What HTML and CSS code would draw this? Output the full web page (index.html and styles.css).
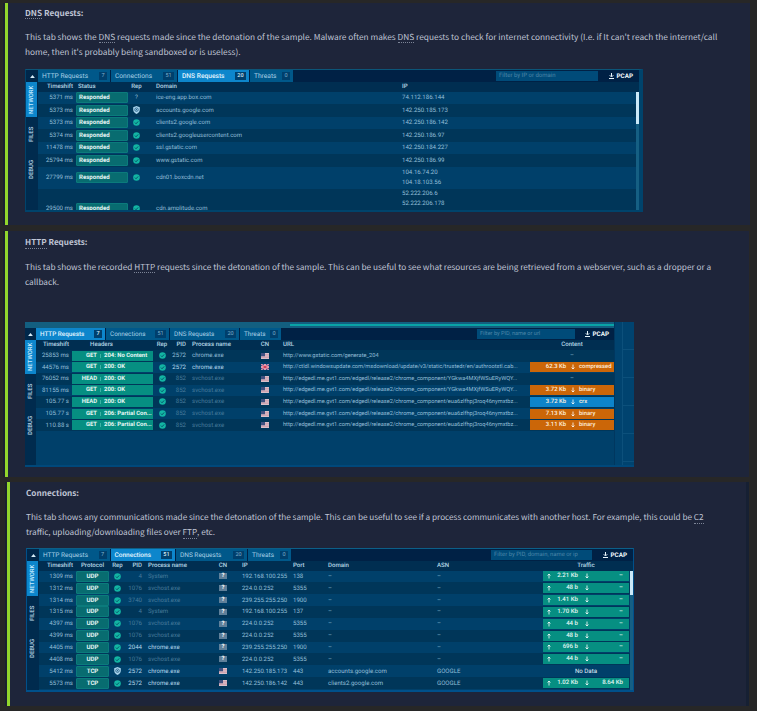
FILE: index.html
```html
<!DOCTYPE html>
<html lang="en">
<head>
<meta charset="utf-8">
<title>Network tabs</title>
<link rel="stylesheet" href="styles.css">
</head>
<body>
<svg class="defs" width="0" height="0">
  <symbol id="ok" viewBox="0 0 14 14"><circle cx="7" cy="7" r="6.6" fill="#12b5a3"/><path d="M3.8 7.2l2.3 2.3 4.2-4.6" fill="none" stroke="#064a67" stroke-width="1.8"/></symbol>
  <symbol id="shield" viewBox="0 0 14 16"><path d="M7 0l6.6 2.3v5.2C13.600 11.500 10.500 14.500 7 16 3.500 14.500.4 11.500.4 7.500V2.300z" fill="#a9d3ec"/><circle cx="7" cy="7.300" r="3.500" fill="none" stroke="#15527c" stroke-width="1.500"/><circle cx="7" cy="7.300" r="1.200" fill="#15527c"/></symbol>
  <symbol id="us" viewBox="0 0 16 12"><path d="M0 0h16v12H0z" fill="#dcc9d2"/><path d="M0 2.600h16M0 6h16M0 9.400h16" stroke="#c98c9c" stroke-width="1.500"/><path d="M0 0h8v6.500H0z" fill="#40507f"/></symbol>
  <symbol id="uk" viewBox="0 0 16 12"><path d="M0 0h16v12H0z" fill="#25408a"/><path d="M0 0l16 12M16 0L0 12" stroke="#e7dce6" stroke-width="2.600"/><path d="M8 0v12M0 6h16" stroke="#f3e6ec" stroke-width="4.400"/><path d="M8 0v12M0 6h16M1 1l14 10M15 1L1 11" stroke="#d2304f" stroke-width="1.700"/></symbol>
  <symbol id="save" viewBox="0 0 10 12"><path d="M5 0v7M1.500 4.500L5 8l3.500-3.500M0 11h10" fill="none" stroke="#e8f4fb" stroke-width="2"/></symbol>
  <symbol id="down" viewBox="0 0 8 12"><path d="M4 1v9M1.200 7L4 10l2.800-3" fill="none" stroke="#fff" stroke-width="1.600"/></symbol>
  <symbol id="up" viewBox="0 0 8 12"><path d="M4 11V2M1.200 5L4 2l2.800 3" fill="none" stroke="#fff" stroke-width="1.600"/></symbol>
  <symbol id="tri" viewBox="0 0 8 5"><path d="M0 5l4-5 4 5z" fill="#d6ecf8"/></symbol>
</svg>

<section class="card c1">
  <h2><abbr>DNS</abbr> Requests:</h2>
  <p>This tab shows the <abbr>DNS</abbr> requests made since the detonation of the sample. Malware often makes <abbr>DNS</abbr> requests to check for internet connectivity (I.e. if It can't reach the internet/call<br>home, then it's probably being sandboxed or is useless).</p>
  <div class="panel p1">
    <div class="side"><i class="fold"><svg><use href="#tri"/></svg></i><b class="on">NETWORK</b><b>FILES</b><b>DEBUG</b></div>
    <div class="main">
      <nav class="bar">
        <a>HTTP Requests<em>7</em></a><a>Connections<em>51</em></a><a class="on">DNS Requests<em>20</em></a><a>Threats<em>0</em></a>
        <span class="filter">Filter by IP or domain</span><strong><svg><use href="#save"/></svg>PCAP</strong>
      </nav>
      <div class="tbl">
        <div class="head"><span class="r">Timeshift</span><span>Status</span><span class="c">Rep</span><span>Domain</span><span>IP</span></div>
        <div class="scroller">
          <div class="rows">
            <div class="row"><span class="r">5371 ms</span><span class="pill">Responded</span><span class="c">?</span><span>ice-eng.app.box.com</span><span>74.112.186.144</span></div>
            <div class="row"><span class="r">5373 ms</span><span class="pill">Responded</span><span class="c"><svg class="sh"><use href="#shield"/></svg></span><span>accounts.google.com</span><span>142.250.185.173</span></div>
            <div class="row"><span class="r">5373 ms</span><span class="pill">Responded</span><span class="c"><svg class="ok"><use href="#ok"/></svg></span><span>clients2.google.com</span><span>142.250.186.142</span></div>
            <div class="row"><span class="r">5374 ms</span><span class="pill">Responded</span><span class="c"><svg class="ok"><use href="#ok"/></svg></span><span>clients2.googleusercontent.com</span><span>142.250.186.97</span></div>
            <div class="row"><span class="r">11478 ms</span><span class="pill">Responded</span><span class="c"><svg class="ok"><use href="#ok"/></svg></span><span>ssl.gstatic.com</span><span>142.250.184.227</span></div>
            <div class="row"><span class="r">25794 ms</span><span class="pill">Responded</span><span class="c"><svg class="ok"><use href="#ok"/></svg></span><span>www.gstatic.com</span><span>142.250.186.99</span></div>
            <div class="row two"><span class="r">27799 ms</span><span class="pill">Responded</span><span class="c"><svg class="ok"><use href="#ok"/></svg></span><span>cdn01.boxcdn.net</span><span>104.16.74.20<br>104.18.103.56</span></div>
            <div class="row four"><span class="r">29500 ms</span><span class="pill">Responded</span><span class="c"><svg class="ok"><use href="#ok"/></svg></span><span>cdn.amplitude.com</span><span class="top">52.222.206.6<br>52.222.206.178</span></div>
          </div>
          <div class="track"><i></i></div>
        </div>
      </div>
    </div>
  </div>
</section>

<section class="card c2">
  <h2><abbr>HTTP</abbr> Requests:</h2>
  <p>This tab shows the recorded <abbr>HTTP</abbr> requests since the detonation of the sample. This can be useful to see what resources are being retrieved from a webserver, such as a dropper or a<br>callback.</p>
  <div class="panel p2">
    <div class="timeline"><i></i></div>
    <div class="side"><i class="fold"><svg><use href="#tri"/></svg></i><b class="on">NETWORK</b><b>FILES</b><b>DEBUG</b></div>
    <div class="main">
      <nav class="bar">
        <a class="on">HTTP Requests<em>7</em></a><a>Connections<em>51</em></a><a>DNS Requests<em>20</em></a><a>Threats<em>0</em></a>
        <span class="filter">Filter by PID, name or url</span><strong><svg><use href="#save"/></svg>PCAP</strong>
      </nav>
      <div class="tbl">
        <div class="head"><span class="r">Timeshift</span><span class="c hd">Headers</span><span class="c">Rep</span><span class="r">PID</span><span>Process name</span><span class="c">CN</span><span class="u">URL</span><span class="c">Content</span></div>
        <div class="row"><span class="r">25853 ms</span><span class="req"><b>GET</b><i></i><b>204: No Content</b></span><span class="c"><svg class="ok"><use href="#ok"/></svg></span><span class="r">2572</span><span>chrome.exe</span><span class="c"><svg class="fl"><use href="#us"/></svg></span><span class="u">http://www.gstatic.com/generate_204</span><span class="c">–</span></div>
        <div class="row lit"><span class="r">44576 ms</span><span class="req"><b>GET</b><i></i><b>200: OK</b></span><span class="c"><svg class="ok"><use href="#ok"/></svg></span><span class="r">2572</span><span>chrome.exe</span><span class="c"><svg class="fl"><use href="#uk"/></svg></span><span class="u">http://ctldl.windowsupdate.com/msdownload/update/v3/static/trustedr/en/authrootstl.cab...</span><span class="file"><b>62.3 Kb</b><svg><use href="#down"/></svg><b>compressed</b></span></div>
        <div class="row dim"><span class="r">76052 ms</span><span class="req"><b>HEAD</b><i></i><b>200: OK</b></span><span class="c"><svg class="ok"><use href="#ok"/></svg></span><span class="r">852</span><span>svchost.exe</span><span class="c"><svg class="fl"><use href="#us"/></svg></span><span class="u">http://edgedl.me.gvt1.com/edgedl/release2/chrome_component/YGkwa4MXjfWSuERyWQY...</span><span class="c">–</span></div>
        <div class="row dim"><span class="r">81155 ms</span><span class="req"><b>GET</b><i></i><b>200: OK</b></span><span class="c"><svg class="ok"><use href="#ok"/></svg></span><span class="r">852</span><span>svchost.exe</span><span class="c"><svg class="fl"><use href="#us"/></svg></span><span class="u">http://edgedl.me.gvt1.com/edgedl/release2/chrome_component/YGkwa4MXjfWSuERyWQY...</span><span class="file"><b>3.72 Kb</b><svg><use href="#down"/></svg><b>binary</b></span></div>
        <div class="row dim"><span class="r">105.77 s</span><span class="req"><b>HEAD</b><i></i><b>200: OK</b></span><span class="c"><svg class="ok"><use href="#ok"/></svg></span><span class="r">852</span><span>svchost.exe</span><span class="c"><svg class="fl"><use href="#us"/></svg></span><span class="u">http://edgedl.me.gvt1.com/edgedl/release2/chrome_component/eua6zlfhpj3roq46nymxtbz...</span><span class="file crx"><b>3.72 Kb</b><svg><use href="#down"/></svg><b>crx</b></span></div>
        <div class="row dim"><span class="r">105.77 s</span><span class="req"><b>GET</b><i></i><b>206: Partial Con...</b></span><span class="c"><svg class="ok"><use href="#ok"/></svg></span><span class="r">852</span><span>svchost.exe</span><span class="c"><svg class="fl"><use href="#us"/></svg></span><span class="u">http://edgedl.me.gvt1.com/edgedl/release2/chrome_component/eua6zlfhpj3roq46nymxtbz...</span><span class="file"><b>7.13 Kb</b><svg><use href="#down"/></svg><b>binary</b></span></div>
        <div class="row dim"><span class="r">110.88 s</span><span class="req"><b>GET</b><i></i><b>206: Partial Con...</b></span><span class="c"><svg class="ok"><use href="#ok"/></svg></span><span class="r">852</span><span>svchost.exe</span><span class="c"><svg class="fl"><use href="#us"/></svg></span><span class="u">http://edgedl.me.gvt1.com/edgedl/release2/chrome_component/eua6zlfhpj3roq46nymxtbz...</span><span class="file"><b>3.11 Kb</b><svg><use href="#down"/></svg><b>binary</b></span></div>
      </div>
    </div>
    <div class="gutter"><i></i></div>
  </div>
</section>

<section class="card c3">
  <h2>Connections:</h2>
  <p>This tab shows any communications made since the detonation of the sample. This can be useful to see if a process communicates with another host. For example, this could be <abbr>C2</abbr><br>traffic, uploading/downloading files over <abbr>FTP</abbr>, etc.</p>
  <div class="panel p3">
    <div class="side"><i class="fold"><svg><use href="#tri"/></svg></i><b class="on">NETWORK</b><b>FILES</b><b>DEBUG</b></div>
    <div class="main">
      <nav class="bar">
        <a>HTTP Requests<em>7</em></a><a class="on">Connections<em>51</em></a><a>DNS Requests<em>20</em></a><a>Threats<em>0</em></a>
        <span class="filter">Filter by PID, domain, name or ip</span><strong><svg><use href="#save"/></svg>PCAP</strong>
      </nav>
      <div class="tbl">
        <div class="head"><span class="r">Timeshift</span><span class="c">Protocol</span><span class="c">Rep</span><span class="r">PID</span><span>Process name</span><span class="c">CN</span><span>IP</span><span>Port</span><span>Domain</span><span>ASN</span><span class="c">Traffic</span></div>
        <div class="scroller">
          <div class="rows">
            <div class="row dim"><span class="r">1309 ms</span><span class="pill">UDP</span><span class="c"><svg class="ok"><use href="#ok"/></svg></span><span class="r">4</span><span>System</span><span class="c"><b class="q">?</b></span><span>192.168.100.255</span><span>138</span><span>–</span><span>–</span><span class="io"><svg><use href="#up"/></svg><b>2.21 Kb</b><svg><use href="#down"/></svg><b>–</b></span></div>
            <div class="row dim"><span class="r">1312 ms</span><span class="pill">UDP</span><span class="c"><svg class="ok"><use href="#ok"/></svg></span><span class="r">1076</span><span>svchost.exe</span><span class="c"><b class="q">?</b></span><span>224.0.0.252</span><span>5355</span><span>–</span><span>–</span><span class="io"><svg><use href="#up"/></svg><b>48 b</b><svg><use href="#down"/></svg><b>–</b></span></div>
            <div class="row dim"><span class="r">1314 ms</span><span class="pill">UDP</span><span class="c"><svg class="ok"><use href="#ok"/></svg></span><span class="r">3740</span><span>svchost.exe</span><span class="c"><b class="q">?</b></span><span>239.255.255.250</span><span>1900</span><span>–</span><span>–</span><span class="io"><svg><use href="#up"/></svg><b>1.41 Kb</b><svg><use href="#down"/></svg><b>–</b></span></div>
            <div class="row dim"><span class="r">1315 ms</span><span class="pill">UDP</span><span class="c"><svg class="ok"><use href="#ok"/></svg></span><span class="r">4</span><span>System</span><span class="c"><b class="q">?</b></span><span>192.168.100.255</span><span>137</span><span>–</span><span>–</span><span class="io"><svg><use href="#up"/></svg><b>1.70 Kb</b><svg><use href="#down"/></svg><b>–</b></span></div>
            <div class="row dim"><span class="r">4397 ms</span><span class="pill">UDP</span><span class="c"><svg class="ok"><use href="#ok"/></svg></span><span class="r">1076</span><span>svchost.exe</span><span class="c"><b class="q">?</b></span><span>224.0.0.252</span><span>5355</span><span>–</span><span>–</span><span class="io"><svg><use href="#up"/></svg><b>44 b</b><svg><use href="#down"/></svg><b>–</b></span></div>
            <div class="row dim"><span class="r">4399 ms</span><span class="pill">UDP</span><span class="c"><svg class="ok"><use href="#ok"/></svg></span><span class="r">1076</span><span>svchost.exe</span><span class="c"><b class="q">?</b></span><span>224.0.0.252</span><span>5355</span><span>–</span><span>–</span><span class="io"><svg><use href="#up"/></svg><b>48 b</b><svg><use href="#down"/></svg><b>–</b></span></div>
            <div class="row lit"><span class="r">4405 ms</span><span class="pill">UDP</span><span class="c"><svg class="ok"><use href="#ok"/></svg></span><span class="r">2044</span><span>chrome.exe</span><span class="c"><b class="q">?</b></span><span>239.255.255.250</span><span>1900</span><span>–</span><span>–</span><span class="io"><svg><use href="#up"/></svg><b>696 b</b><svg><use href="#down"/></svg><b>–</b></span></div>
            <div class="row dim"><span class="r">4408 ms</span><span class="pill">UDP</span><span class="c"><svg class="ok"><use href="#ok"/></svg></span><span class="r">1076</span><span>svchost.exe</span><span class="c"><b class="q">?</b></span><span>224.0.0.252</span><span>5355</span><span>–</span><span>–</span><span class="io"><svg><use href="#up"/></svg><b>44 b</b><svg><use href="#down"/></svg><b>–</b></span></div>
            <div class="row lit"><span class="r">5412 ms</span><span class="pill">TCP</span><span class="c"><svg class="sh"><use href="#shield"/></svg></span><span class="r">2572</span><span>chrome.exe</span><span class="c"><svg class="fl"><use href="#us"/></svg></span><span>142.250.185.173</span><span>443</span><span>accounts.google.com</span><span>GOOGLE</span><span class="c none">No Data</span></div>
            <div class="row lit"><span class="r">5573 ms</span><span class="pill">TCP</span><span class="c"><svg class="ok"><use href="#ok"/></svg></span><span class="r">2572</span><span>chrome.exe</span><span class="c"><svg class="fl"><use href="#us"/></svg></span><span>142.250.186.142</span><span>443</span><span>clients2.google.com</span><span>GOOGLE</span><span class="io"><svg><use href="#up"/></svg><b>1.02 Kb</b><svg><use href="#down"/></svg><b>8.64 Kb</b></span></div>
          </div>
          <div class="track"><i></i></div>
        </div>
      </div>
    </div>
  </div>
</section>
</body>
</html>
```
FILE: styles.css
```css
* { box-sizing: border-box; }
body {
  margin: 0;
  padding: 3px 0 0 5px;
  height: 711px;
  overflow: hidden;
  background: #272727;
  font-family: Roboto, "Liberation Sans", sans-serif;
  text-rendering: geometricPrecision;
}
.defs { position: absolute; }
svg { display: block; flex: none; }

.card {
  width: 745px;
  background: #1e253a;
  border-left: 3px solid #93d62c;
  box-shadow: -2px 0 #1a2130;
  padding-left: 17px;
  color: #c0c6d6;
  font-family: "Noto Sans CJK SC", "Noto Sans", sans-serif;
  white-space: nowrap;
  overflow: hidden;
}
.c1 { height: 222px; margin-bottom: 6px; }
.c2 { height: 246px; margin-bottom: 5px; width: 744px; }
.c3 { height: 224px; width: 742px; margin-left: 2px; padding-left: 16px; border-right: 3px solid #162033; }
.card h2 { margin: 3px 0 10px; font-size: 8.200px; line-height: 14px; font-weight: 700; }
.card p { margin: 0; font-size: 8.310px; line-height: 15px; height: 30px; }
.c2 h2 { margin-top: 5px; margin-bottom: 10px; font-size: 8.100px; }
.c2 p { font-size: 8.230px; }
.c3 h2 { margin-top: 4px; margin-bottom: 10px; }
.c3 p { font-size: 8.180px; }
abbr { border-bottom: 1px dotted #7c8496; display: inline-block; line-height: 10px; }

.panel {
  display: grid;
  grid-template-columns: 12px 1fr;
  background: #00406a;
  color: #93bfd8;
  font-family: Roboto, "Liberation Sans", sans-serif;
  font-size: 6.1px;
}
.p1 { width: 618px; height: 143px; margin-top: 9px; border: solid #00436b; border-width: 1px 4px 2px 1px; border-top-color: #0c5578; }
.p2 { width: 609px; height: 145px; margin-top: 32px; grid-template-columns: 11px 578px 20px; grid-template-rows: 6px 1fr; border-bottom: 2px solid #00487a; }
.p3 { width: 608px; height: 144px; margin-top: 8px; border: solid #00508a; border-width: 1px 1px 2px 1px; border-top-color: #0c5f88; }

.side { background: #002b4e; display: flex; flex-direction: column; }
.fold { height: 12px; display: flex; align-items: center; justify-content: center; background: #00274a; }
.fold svg { width: 5px; height: 3px; }
.side b {
  height: 35px;
  width: 11px;
  writing-mode: vertical-rl;
  transform: rotate(180deg);
  text-align: center;
  line-height: 11px;
  font-size: 6px;
  font-weight: 500;
  color: #bdd9e8;
}
.side b.on { background: #0d86cc; color: #c5ecff; }
.p2 .side b { height: 34px; }

.bar { height: 12px; display: flex; background: #002145; line-height: 12px; }
.bar a {
  height: 11.500px;
  display: flex;
  align-items: center;
  justify-content: space-between;
  background: #00588a;
  color: #a9d0e6;
  font-size: 6.650px;
  padding: 1px 3px 0 4px;
  margin-right: 1px;
}
.bar a.on { background: #0d86cc; color: #e3f5ff; font-weight: 500; }
.bar em { font-style: normal; font-size: 5.500px; line-height: 8px; height: 8px; width: 11px; text-align: center; background: #003f6c; color: #7fb0cc; }
.bar a.on em { background: #00406e; color: #d5ecf8; }
.bar a:nth-child(1) em, .bar a:nth-child(4) em { width: 8px; }
.bar a:nth-child(1) { width: 72px; }
.bar a:nth-child(2) { width: 66px; }
.bar a:nth-child(3) { width: 71px; }
.bar a:nth-child(4) { width: 43px; }
.p2 .bar a { font-size: 6.350px; }
.p2 .bar a:nth-child(1) { width: 69px; }
.p2 .bar a:nth-child(2) { width: 63px; }
.p2 .bar a:nth-child(3) { width: 69px; }
.p2 .bar a:nth-child(4) { width: 41px; }
.p3 .bar a { font-size: 6.500px; }
.p3 .bar a:nth-child(1) { width: 70.500px; }
.p3 .bar a:nth-child(2) { width: 64.500px; }
.filter { margin: 1px 0 0 auto; height: 9.500px; line-height: 10px; width: 102px; padding-left: 3px; background: #004b79; color: #4c86a8; font-size: 6px; }
.p2 .filter { width: 98px; font-size: 5.600px; }
.p3 .filter { width: 101px; font-size: 5.900px; }
.bar strong { display: flex; align-items: center; justify-content: space-between; width: 24px; margin: 0 6px 0 11px; font-size: 6.300px; color: #f2f9fd; font-weight: 700; }
.p2 .bar strong { margin: 0 5px 0 10px; }
.bar strong svg { width: 5px; height: 6px; }

.head, .row { display: grid; align-items: center; }
.head { height: 9.500px; line-height: 10px; background: #002e51; color: #b4d6e6; font-weight: 500; font-size: 6.100px; }
.r { text-align: right; }
.c { text-align: center; display: flex; justify-content: center; align-items: center; }
.row:nth-child(even) { background: #003659; }
.ok { width: 7px; height: 7px; }
.sh { width: 7px; height: 8px; }
.fl { width: 8px; height: 6px; }
.pill { align-self: center; height: 11px; line-height: 9px; border: 1px solid #0b7b7c; background: #086c70; color: #e4f5f5; font-weight: 700; border-radius: 1px; }
.scroller { display: flex; overflow: hidden; }
.rows { flex: 1; }
.track { width: 3px; background: #155f83; }
.track i { display: block; background: #cbe9f8; }
.dim > span:nth-child(4), .dim > span:nth-child(5) { color: #467a9a; }
.lit > span:nth-child(4), .lit > span:nth-child(5) { color: #b5d8ea; }

/* DNS table */
.p1 .head, .p1 .row { grid-template-columns: 35px 52px 19px 236px 1fr; column-gap: 0; }
.p1 .head > :nth-child(2), .p1 .row > :nth-child(2) { margin-left: 3px; padding-left: 2px; margin-right: -3px; }
.p1 .head > :nth-child(3), .p1 .row > :nth-child(3) { padding-left: 4px; }
.p1 .head > :nth-child(4), .p1 .row > :nth-child(4) { padding-left: 12px; }
.p1 .head > :nth-child(5), .p1 .row > :nth-child(5) { padding-left: 22px; }
.p1 .row { height: 12.500px; }
.p1 .row > :nth-child(4) { font-size: 6px; }
.p1 .row.two { height: 22px; line-height: 10px; }
.p1 .row.four { height: 40px; line-height: 10px; }
.p1 .row .top { align-self: start; padding-top: 0; }
.p1 .two .pill, .p1 .four .pill { line-height: 9px; }
.p1 .scroller { height: 118.500px; }
.p1 .track i { height: 32px; }

/* HTTP table */
.timeline { grid-column: 1 / 3; background: #135f80; padding: 2px 0 0 265px; }
.timeline i { display: block; height: 2px; background: #0aa3a5; }
.p2 .bar, .p2 .fold { height: 12px; }
.p2 .head, .p2 .row { grid-template-columns: 33px 3px 81px 18px 15px 6px 60px 26px 5px 247px 84px; }
.p2 .head > :nth-child(2), .p2 .row > :nth-child(2) { grid-column: 3; }
.p2 .head > :nth-child(5), .p2 .row > :nth-child(5) { grid-column: 7; }
.p2 .head > .u, .p2 .row > .u { grid-column: 10; }
.p2 .head { height: 10px; }
.p2 .hd { padding-right: 22px; }
.p2 .row { height: 11.550px; }
.p2 .row .u { font-size: 5.660px; }
.req { display: grid; grid-template-columns: 25px 7px 1fr; height: 10px; line-height: 10px; background: #068f82; color: #e6f8f5; }
.req b { font-weight: 700; font-size: 5.900px; }
.req b:first-child { text-align: right; }
.req i { width: 1px; height: 4px; margin: 3px; background: #3cb3a6; }
.file { display: grid; grid-template-columns: 36px 13px 1fr; align-items: center; height: 10px; line-height: 10px; background: #cb6608; color: #fff0df; }
.file.crx { background: #0d84ca; }
.file b { font-size: 5.900px; font-weight: 500; }
.file b:first-child { text-align: right; }
.file svg, .io svg { width: 4px; height: 6px; margin: 0 auto; }
.gutter { border-left: 1px solid #00375f; display: flex; justify-content: flex-end; grid-column: 3; grid-row: 1 / 3; background: #00436f; }
.gutter i { width: 12px; border-left: 1px solid #0c507b; background: repeating-linear-gradient(#00436f 0 27px, #0c507b 27px 28px); }

/* Connections table */
.p3 .head, .p3 .row { grid-template-columns: 34px 3px 33px 17px 16px 6px 65px 20px 9px 51px 35px 109px 106px 86px; }
.p3 .head > :nth-child(2), .p3 .row > :nth-child(2) { grid-column: 3; }
.p3 .head > :nth-child(5), .p3 .row > :nth-child(5) { grid-column: 7; }
.p3 .head > :nth-child(7), .p3 .row > :nth-child(7) { grid-column: 10; }
.p3 .row { height: 11.850px; }
.p3 .row > :nth-child(7) { font-size: 6px; }
.p3 .pill { text-align: center; }
.p3 .scroller { height: 119px; }
.p3 .track i { height: 24px; }
.q { width: 8px; height: 6px; line-height: 6px; font-size: 6px; background: #5f809a; color: #fff; text-align: center; }
.io { display: grid; grid-template-columns: 11px 24px 17px 1fr; align-items: center; height: 10px; line-height: 10px; padding-right: 6px; background: #068f82; color: #e0f6f3; }
.io b { font-weight: 500; font-size: 6.100px; text-align: right; }
.none { color: #e4f2fa; }
```
